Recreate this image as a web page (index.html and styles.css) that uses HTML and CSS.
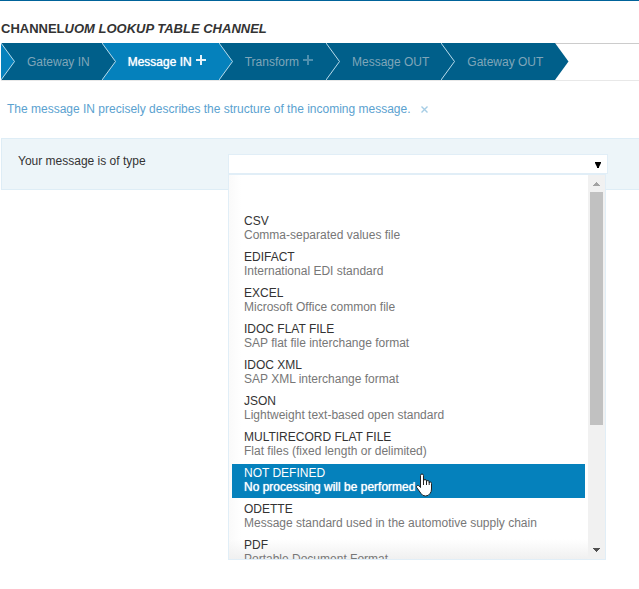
FILE: index.html
```html
<!DOCTYPE html>
<html lang="en">
<head>
<meta charset="utf-8">
<title>Channel</title>
<link rel="stylesheet" href="styles.css">
</head>
<body>
<header class="topline"></header>
<main>
  <h1 class="title">CHANNEL<em>UOM LOOKUP TABLE CHANNEL</em></h1>
  <nav class="steps">
    <span class="start"><svg class="chevron" viewBox="0 0 14 37"><path class="fill-active" d="M0 0L13.500 18.500L0 37z"/><path class="edge" d="M0 0L13.500 18.500L0 37"/></svg></span>
    <a class="step" href="#gateway-in">Gateway IN<svg class="chevron" viewBox="0 0 14 37"><path class="fill-step" d="M0 0L13.500 18.500L0 37z"/><path class="edge" d="M0 0L13.500 18.500L0 37"/></svg></a>
    <a class="step active" href="#message-in">Message IN<svg class="plus" viewBox="0 0 11 10"><path d="M5 0V10M0 5H10"/></svg><svg class="chevron" viewBox="0 0 14 37"><path class="fill-active" d="M0 0L13.500 18.500L0 37z"/><path class="edge" d="M0 0L13.500 18.500L0 37"/></svg></a>
    <a class="step" href="#transform">Transform<svg class="plus" viewBox="0 0 11 10"><path d="M5 0V10M0 5H10"/></svg><svg class="chevron" viewBox="0 0 14 37"><path class="fill-step" d="M0 0L13.500 18.500L0 37z"/><path class="edge" d="M0 0L13.500 18.500L0 37"/></svg></a>
    <a class="step" href="#message-out">Message OUT<svg class="chevron" viewBox="0 0 14 37"><path class="fill-step" d="M0 0L13.500 18.500L0 37z"/><path class="edge" d="M0 0L13.500 18.500L0 37"/></svg></a>
    <a class="step" href="#gateway-out">Gateway OUT<svg class="chevron" viewBox="0 0 14 37"><path class="fill-step" d="M0 0L13.500 18.500L0 37z"/></svg></a>
  </nav>
  <p class="hint">The message IN precisely describes the structure of the incoming message.
    <button class="dismiss" type="button" aria-label="Dismiss"><svg viewBox="0 0 7 7"><path d="M.5 .5L6.500 6.500M6.500 .5L.5 6.500"/></svg></button></p>
  <form class="panel">
    <label class="label" for="type">Your message is of type</label>
    <div class="combo">
      <select class="select" id="type"><option></option></select>
      <svg class="arrow" viewBox="0 0 6 6"><path d="M0 0H6V1L5 3L4 5V6H2V5L1 3L0 1z"/></svg>
      <div class="popup">
        <ul class="options" role="listbox" aria-labelledby="type">
          <li class="option blank" role="option"></li>
          <li class="option" role="option">CSV<small>Comma-separated values file</small></li>
          <li class="option" role="option">EDIFACT<small>International EDI standard</small></li>
          <li class="option" role="option">EXCEL<small>Microsoft Office common file</small></li>
          <li class="option" role="option">IDOC FLAT FILE<small>SAP flat file interchange format</small></li>
          <li class="option" role="option">IDOC XML<small>SAP XML interchange format</small></li>
          <li class="option" role="option">JSON<small>Lightweight text-based open standard</small></li>
          <li class="option" role="option">MULTIRECORD FLAT FILE<small>Flat files (fixed length or delimited)</small></li>
          <li class="option current" role="option">NOT DEFINED<small>No processing will be performed<svg class="pointer" viewBox="0 0 17 24"><path d="M5 13V2.500Q5 1 6.500 1Q8 1 8 2.500V8Q8 6.500 9.500 6.500Q11 6.500 11 8V9Q11 7.500 12.300 7.500Q13.700 7.500 13.700 9V10Q13.700 9 14.800 9Q16 9 16 10.500V16Q16 19 14.500 20.500Q13 23 10 23Q7 23 5.500 20.500L1.200 14.500Q.6 13 1.700 12.500Q2.800 12 3.700 13L5 14.500z"/><path d="M8 7V12M11 8V12M13.700 9.500V12"/></svg></small></li>
          <li class="option" role="option">ODETTE<small>Message standard used in the automotive supply chain</small></li>
          <li class="option" role="option">PDF<small>Portable Document Format</small></li>
        </ul>
        <div class="scrollbar">
          <svg class="scroll-up" viewBox="0 0 7 4"><path d="M3 0H4V1H5V2H6V3H7V4H0V3H1V2H2V1H3z"/></svg>
          <span class="thumb"></span>
          <svg class="scroll-down" viewBox="0 0 7 4"><path d="M0 0H7V1H6V2H5V3H4V4H3V3H2V2H1V1H0z"/></svg>
        </div>
      </div>
    </div>
  </form>
</main>
</body>
</html>
```

FILE: styles.css
```css
* { box-sizing: border-box; }
body {
  margin: 0;
  min-height: 100vh;
  background: #fff;
  color: #333;
  font: 12px/14px "Liberation Sans", Arial, sans-serif;
}
svg { display: block; }
.topline { height: 1px; background: #00639a; }
.title {
  margin: 0;
  padding: 20px 0 6px 1px;
  font-size: 13px;
  line-height: 16px;
  font-weight: bold;
}
.steps {
  display: flex;
  height: 38px;
  margin-left: 1px;
  border-top: 1px solid #ccc;
  border-bottom: 1px solid #e8e8e8;
}
.start, .step {
  position: relative;
  height: 37px;
  margin-top: -1px;
  background: #005f8a;
}
.step {
  display: flex;
  align-items: center;
  gap: 4px;
  padding: 0 12px 0 26px;
  color: #7fa6b9;
  text-decoration: none;
}
.step.active {
  background: #0581bc;
  color: #fff;
  text-shadow: 0 0 1px #fff;
}
.chevron {
  position: absolute;
  left: 100%;
  top: 0;
  z-index: 1;
  width: 14px;
  height: 37px;
}
.fill-step { fill: #005f8a; }
.fill-active { fill: #0581bc; }
.edge { fill: none; stroke: #b9dcec; stroke-width: 1; }
.plus {
  width: 11px;
  height: 10px;
  margin-bottom: 3px;
  fill: none;
  stroke: #4f8fae;
  stroke-width: 2;
}
.active .plus { stroke: #e6f3fa; }
.hint {
  display: flex;
  align-items: center;
  gap: 10px;
  margin: 0;
  padding: 21px 7px 22px;
  color: #5ba2d0;
}
.dismiss { border: 0; padding: 0; background: none; }
.dismiss svg { width: 7px; height: 7px; fill: none; stroke: #a6cde5; stroke-width: 1.4; }
.panel {
  display: flex;
  align-items: flex-start;
  height: 52px;
  margin-left: 1px;
  padding: 15px 31px 0 16px;
  border: 1px solid #deedf6;
  border-right: 0;
  background: #edf5f9;
}
.label { width: 210px; flex: none; }
.combo { position: relative; flex: 1; }
.select {
  display: block;
  width: 100%;
  height: 20px;
  border: 1px solid #e1eef7;
  border-radius: 0;
  background: #fff;
  appearance: none;
}
.arrow { position: absolute; right: 7px; top: 8px; width: 6px; height: 6px; }
.popup {
  position: absolute;
  top: 19px;
  left: 0;
  right: 2px;
  display: flex;
  height: 387px;
  border: 1px solid #e1eef7;
  border-top-width: 2px;
  background: #fff;
}
.options {
  flex: 1;
  margin: 0;
  padding: 1px 3px;
  overflow: hidden;
  list-style: none;
  background: linear-gradient(to top, #f0f0f0, #fff0 20px), linear-gradient(to right, #fafafa, #fff 12px);
}
.option { height: 34px; margin-bottom: 2px; padding: 2px 12px; }
.option small { display: block; font-size: 12px; color: #777; }
.current { background: #0581bc; color: #fff; }
.option.current small {
  position: relative;
  width: max-content;
  color: #fff;
  text-shadow: 0 0 1px #fff;
}
.pointer {
  position: absolute;
  left: 100%;
  top: -7px;
  width: 18px;
  height: 24px;
  fill: #fff;
  stroke: #222;
  stroke-width: 1;
}
.scrollbar {
  display: flex;
  flex-direction: column;
  align-items: center;
  width: 17px;
  padding: 7px 0;
  background: #f1f1f1;
}
.scroll-up { width: 7px; height: 4px; fill: #a3a3a3; }
.thumb { width: 13px; height: 233px; margin: 6px 0 auto; background: #c1c1c1; }
.scroll-down { width: 7px; height: 4px; fill: #505050; }
```
